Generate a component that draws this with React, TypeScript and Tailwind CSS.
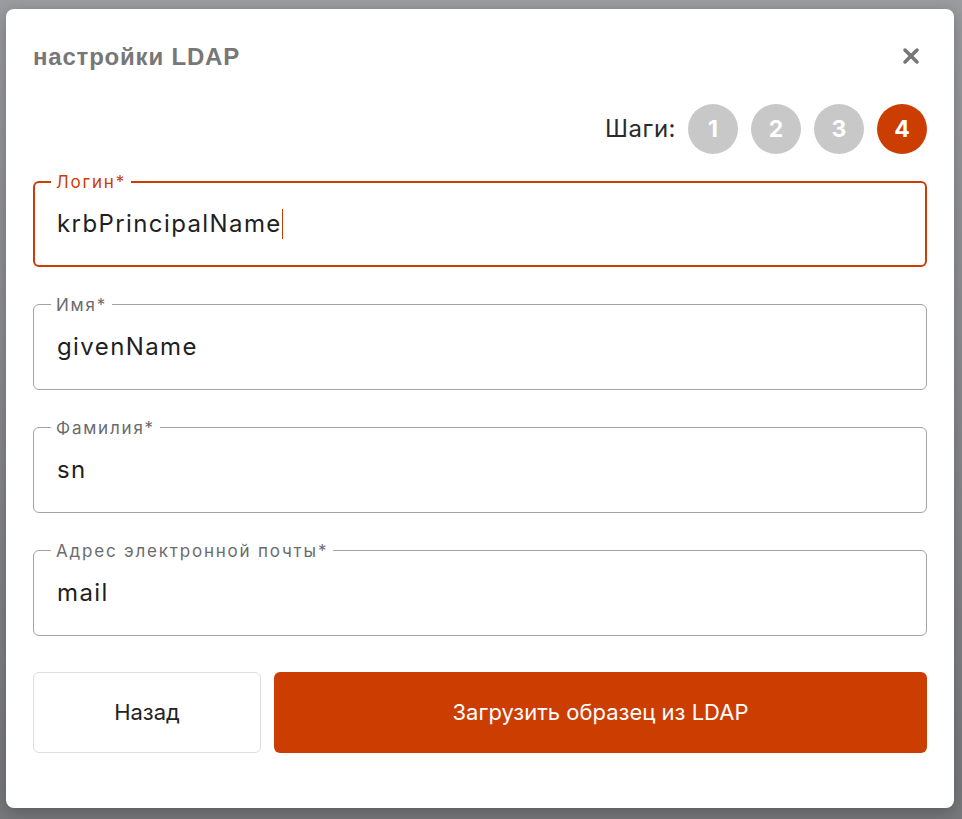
import { X } from "lucide-react";

type Field = {
  label: string;
  value: string;
  active?: boolean;
};

const fields: Field[] = [
  { label: "Логин*", value: "krbPrincipalName", active: true },
  { label: "Имя*", value: "givenName" },
  { label: "Фамилия*", value: "sn" },
  { label: "Адрес электронной почты*", value: "mail" },
];

function OutlinedField({ label, value, active }: Field) {
  return (
    <div
      className={
        active
          ? "relative h-[86px] rounded-[6px] border-2 border-[#cc3d02] flex items-center pl-[22px]"
          : "relative h-[86px] rounded-[6px] border border-[#a3a3a3] flex items-center pl-[23px]"
      }
    >
      <span
        className={
          active
            ? "absolute left-[16px] -top-[12px] bg-white px-[5px] text-[17px] leading-[22px] tracking-[1.8px] text-[#cc3d02]"
            : "absolute left-[17px] -top-[11px] bg-white px-[5px] text-[17px] leading-[22px] tracking-[1.8px] text-[#6b6b6b]"
        }
      >
        {label}
      </span>
      <span className="text-[24px] tracking-[1.4px] text-[#1f1f1f]">{value}</span>
      {active && <span className="h-[30px] w-[1.5px] bg-[#cc3d02]" />}
    </div>
  );
}

function Step({ n, active }: { n: number; active?: boolean }) {
  return (
    <div
      className={
        active
          ? "w-[50px] h-[50px] rounded-full bg-[#cc3d02] flex items-center justify-center text-white text-[23px] font-bold"
          : "w-[50px] h-[50px] rounded-full bg-[#c8c8c8] flex items-center justify-center text-white text-[23px] font-bold"
      }
    >
      {n}
    </div>
  );
}

export default function App() {
  return (
    <div
      className="min-h-[819px] w-full bg-gradient-to-b from-[#9b9ca0] to-[#77787c] pt-[9px] px-[6px] pb-[11px]"
      style={{ fontFamily: "Inter, 'Noto Sans', sans-serif" }}
    >
      <div className="w-[948px] h-[799px] bg-white rounded-[8px] shadow-[0_4px_16px_rgba(0,0,0,0.25)] px-[27px] pt-[33px]">
        <div className="flex items-center justify-between h-[30px]">
          <h1
            className="text-[24px] font-bold tracking-[0.8px] text-[#777777]"
            style={{ fontFamily: "'Liberation Sans', Arial, sans-serif" }}
          >
            настройки LDAP
          </h1>
          <X className="w-[24px] h-[24px] text-[#777777] mr-[4px] -mt-[2px]" strokeWidth={3.5} />
        </div>

        <div className="flex items-center justify-end gap-[13px] mt-[32px]">
          <span className="text-[24px] tracking-[0.5px] text-[#2b2b2b] mr-[-1px]">Шаги:</span>
          <Step n={1} />
          <Step n={2} />
          <Step n={3} />
          <Step n={4} active />
        </div>

        <div className="flex flex-col gap-[37px] mt-[27px]">
          {fields.map((f) => (
            <OutlinedField key={f.label} {...f} />
          ))}
        </div>

        <div className="flex gap-[13px] mt-[36px]">
          <button className="w-[228px] h-[81px] rounded-[6px] border border-[#dedede] bg-white text-[22px] text-[#222222]">
            Назад
          </button>
          <button className="flex-1 h-[81px] rounded-[6px] bg-[#cc3d02] text-[22px] text-white">
            Загрузить образец из LDAP
          </button>
        </div>
      </div>
    </div>
  );
}
